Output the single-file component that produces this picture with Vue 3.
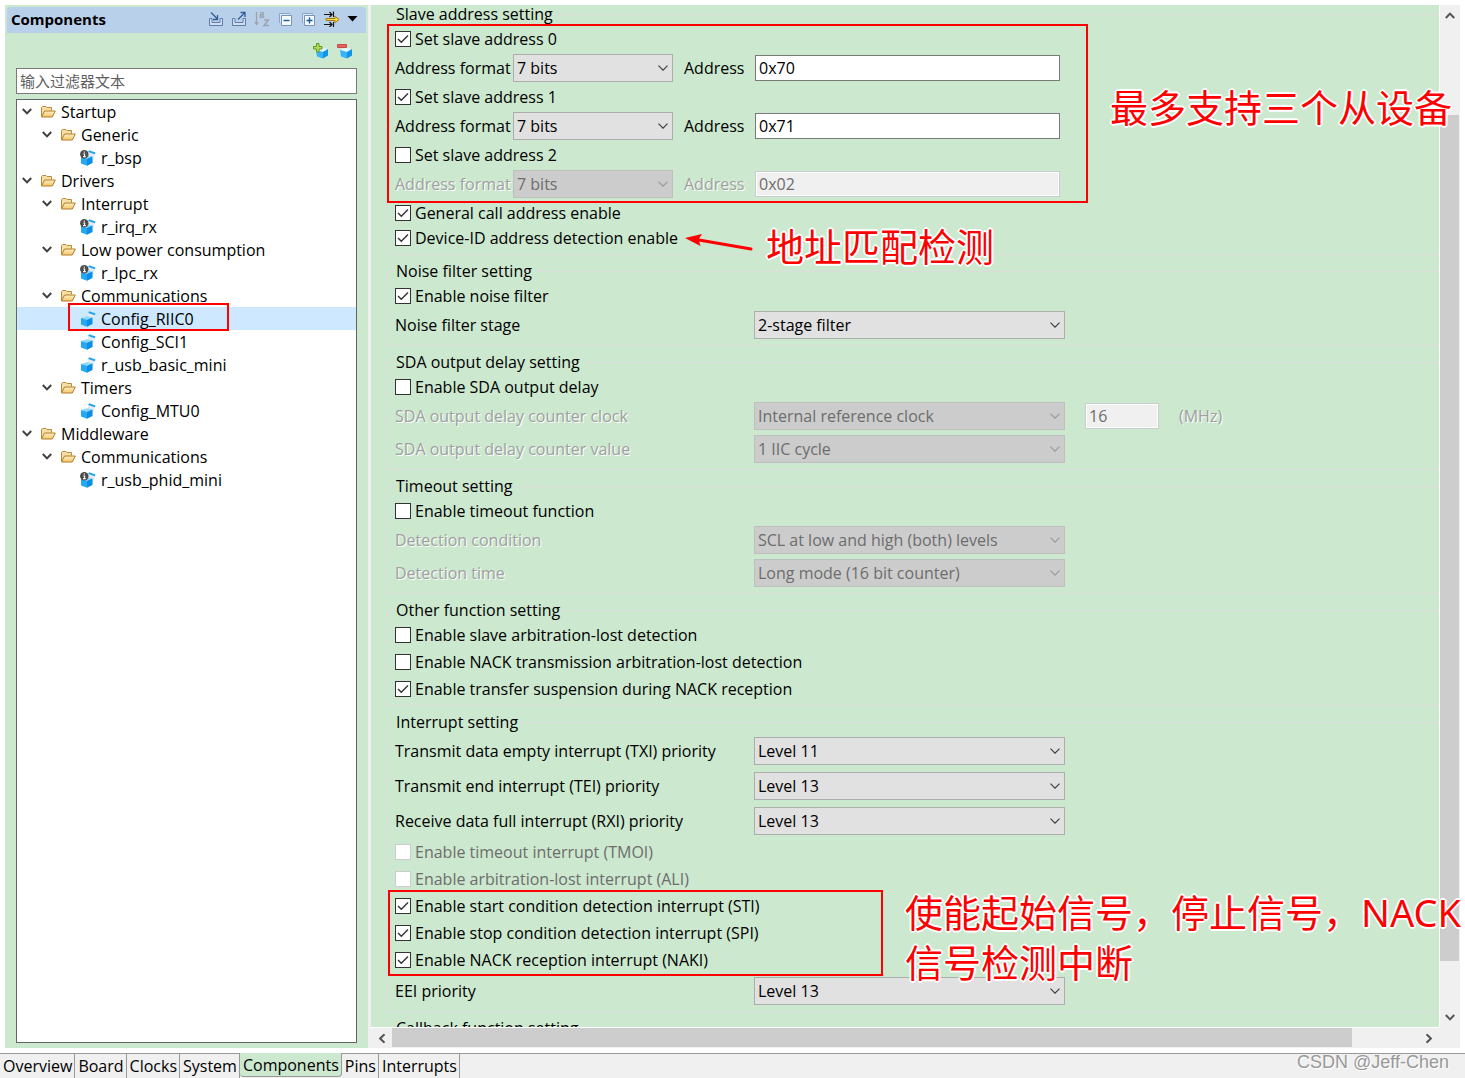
<script setup>
import { ref } from 'vue'

const filterText = ref('')

const tree = [
  { level: 0, kind: 'folder', name: 'Startup' },
  { level: 1, kind: 'folder', name: 'Generic' },
  { level: 2, kind: 'info', name: 'r_bsp' },
  { level: 0, kind: 'folder', name: 'Drivers' },
  { level: 1, kind: 'folder', name: 'Interrupt' },
  { level: 2, kind: 'info', name: 'r_irq_rx' },
  { level: 1, kind: 'folder', name: 'Low power consumption' },
  { level: 2, kind: 'info', name: 'r_lpc_rx' },
  { level: 1, kind: 'folder', name: 'Communications' },
  { level: 2, kind: 'cube', name: 'Config_RIIC0', selected: true },
  { level: 2, kind: 'cube', name: 'Config_SCI1' },
  { level: 2, kind: 'cube', name: 'r_usb_basic_mini' },
  { level: 1, kind: 'folder', name: 'Timers' },
  { level: 2, kind: 'cube', name: 'Config_MTU0' },
  { level: 0, kind: 'folder', name: 'Middleware' },
  { level: 1, kind: 'folder', name: 'Communications' },
  { level: 2, kind: 'info', name: 'r_usb_phid_mini' },
]

const groups = [
  {
    title: 'Slave address setting',
    rows: [
      { type: 'check', label: 'Set slave address 0', checked: true },
      { type: 'address', value: '7 bits', address: '0x70' },
      { type: 'check', label: 'Set slave address 1', checked: true },
      { type: 'address', value: '7 bits', address: '0x71' },
      { type: 'check', label: 'Set slave address 2', checked: false },
      { type: 'address', value: '7 bits', address: '0x02', disabled: true },
      { type: 'check', label: 'General call address enable', checked: true },
      { type: 'check', label: 'Device-ID address detection enable', checked: true },
    ],
  },
  {
    title: 'Noise filter setting',
    rows: [
      { type: 'check', label: 'Enable noise filter', checked: true },
      { type: 'select', label: 'Noise filter stage', value: '2-stage filter' },
    ],
  },
  {
    title: 'SDA output delay setting',
    rows: [
      { type: 'check', label: 'Enable SDA output delay', checked: false },
      { type: 'select', label: 'SDA output delay counter clock', value: 'Internal reference clock', disabled: true, extra: '16', unit: '(MHz)' },
      { type: 'select', label: 'SDA output delay counter value', value: '1 IIC cycle', disabled: true },
    ],
  },
  {
    title: 'Timeout setting',
    rows: [
      { type: 'check', label: 'Enable timeout function', checked: false },
      { type: 'select', label: 'Detection condition', value: 'SCL at low and high (both) levels', disabled: true },
      { type: 'select', label: 'Detection time', value: 'Long mode (16 bit counter)', disabled: true },
    ],
  },
  {
    title: 'Other function setting',
    roomy: true,
    rows: [
      { type: 'check', label: 'Enable slave arbitration-lost detection', checked: false },
      { type: 'check', label: 'Enable NACK transmission arbitration-lost detection', checked: false },
      { type: 'check', label: 'Enable transfer suspension during NACK reception', checked: true },
    ],
  },
  {
    title: 'Interrupt setting',
    roomy: true,
    rows: [
      { type: 'select', label: 'Transmit data empty interrupt (TXI) priority', value: 'Level 11' },
      { type: 'select', label: 'Transmit end interrupt (TEI) priority', value: 'Level 13' },
      { type: 'select', label: 'Receive data full interrupt (RXI) priority', value: 'Level 13' },
      { type: 'check', label: 'Enable timeout interrupt (TMOI)', checked: false, disabled: true },
      { type: 'check', label: 'Enable arbitration-lost interrupt (ALI)', checked: false, disabled: true },
      { type: 'check', label: 'Enable start condition detection interrupt (STI)', checked: true },
      { type: 'check', label: 'Enable stop condition detection interrupt (SPI)', checked: true },
      { type: 'check', label: 'Enable NACK reception interrupt (NAKI)', checked: true },
      { type: 'select', label: 'EEI priority', value: 'Level 13' },
    ],
  },
  { title: 'Callback function setting', rows: [] },
]

const tabs = ['Overview', 'Board', 'Clocks', 'System', 'Components', 'Pins', 'Interrupts']
const activeTab = ref('Components')
</script>

<template>
  <div class="page">
    <svg class="defs" width="0" height="0" aria-hidden="true">
      <defs>
        <linearGradient id="folderFill" x1="0" y1="0" x2="0" y2="1">
          <stop offset="0" stop-color="#fff0c4" />
          <stop offset="1" stop-color="#f3c566" />
        </linearGradient>
        <symbol id="icon-folder" viewBox="0 0 16 16">
          <path d="M1.5 12.5V3.5L2.5 2.5H6L7 3.5H11.5V6.5" fill="#f6dfa4" stroke="#b98a3c" />
          <path d="M1.5 13L4.5 7H15.3L12.3 13Z" fill="url(#folderFill)" stroke="#b27d2c" />
        </symbol>
        <symbol id="icon-cube" viewBox="0 0 16 16">
          <path d="M8 1.2L15 3.5L13 11L8 13Z" fill="#e4ebf1" />
          <path d="M9 0.3L15.5 2.6L14.8 4.2L8.3 2Z" fill="#1ca3f2" />
          <path d="M1 7L7 5.2L12.5 6.6L7 8.8Z" fill="#8bd8ff" />
          <path d="M1 7L7 8.8V15.8L1 13.4Z" fill="#25a9f5" />
          <path d="M7 8.8L12.5 6.6V13L7 15.8Z" fill="#0c8fe2" />
        </symbol>
        <symbol id="icon-info" viewBox="0 0 16 16">
          <use href="#icon-cube" />
          <circle cx="4.3" cy="4.3" r="4.2" fill="#4b4b4b" />
          <path d="M4.3 1.4V2.8M3.2 4H4.6V6.4M3 6.6H5.8" stroke="#fff" stroke-width="1.1" fill="none" />
        </symbol>
        <symbol id="icon-box" viewBox="0 0 16 16">
          <path d="M3 7L8 4.5L15 6L10 9Z" fill="#e2f5ff" />
          <path d="M3 7L10 9V15.5L4 13.5Z" fill="#35b4fb" />
          <path d="M10 9L15 6V12.5L10 15.5Z" fill="#1294e4" />
        </symbol>
        <symbol id="chevron" viewBox="0 0 10 6">
          <path d="M0.5 0.7L5 5.2L9.5 0.7" fill="none" stroke="currentColor" stroke-width="1.2" />
        </symbol>
        <symbol id="chevron-bold" viewBox="0 0 10 7">
          <path d="M0.8 1L5 5.4L9.2 1" fill="none" stroke="currentColor" stroke-width="2" />
        </symbol>
      </defs>
    </svg>

    <main class="workspace">
      <aside class="side">
        <header class="side-head">
          <h1>Components</h1>
          <div class="tools">
            <button type="button" aria-label="Import">
              <svg width="16" height="16" viewBox="0 0 16 16" fill="none">
                <path d="M4 7.5H1.5V14.5H14.5V7.5H12V11.5H4Z" fill="#d5deee" stroke="#5f7cab" />
                <path d="M3 1.5L9 7.5M9.5 4V8.5H5" stroke="#2f5f96" stroke-width="1.3" />
              </svg>
            </button>
            <button type="button" aria-label="Export">
              <svg width="16" height="16" viewBox="0 0 16 16" fill="none">
                <path d="M4 7.5H1.5V14.5H14.5V7.5H12V11.5H4Z" fill="#d5deee" stroke="#5f7cab" />
                <path d="M7 8.5L13.5 2M9.5 1.5H14V6" stroke="#2f5f96" stroke-width="1.3" />
              </svg>
            </button>
            <button type="button" aria-label="Sort">
              <svg width="16" height="16" viewBox="0 0 16 16" fill="none" stroke="#9da3ab">
                <path d="M2.5 1V13M0.8 11L2.5 13.5L4.2 11" stroke-width="1.3" />
                <path d="M6 1.6H9V6.5M9 3.8H6.3V6.3H10.2" stroke-width="1.4" />
                <path d="M10 9H14.5L10 14.5H15" stroke-width="1.5" />
              </svg>
            </button>
            <button type="button" aria-label="Collapse all">
              <svg width="16" height="16" viewBox="0 0 16 16" fill="none">
                <path d="M2.5 12V2.5H13" stroke="#8aa5c8" fill="#dfe9f5" />
                <path d="M4.5 4.5H14.5V14.5H4.5Z" stroke="#7893b7" fill="#f4fafd" />
                <path d="M6.5 9.5H12.5" stroke="#1d5c97" stroke-width="1.4" />
              </svg>
            </button>
            <button type="button" aria-label="Expand all">
              <svg width="16" height="16" viewBox="0 0 16 16" fill="none">
                <path d="M2.5 12V2.5H13" stroke="#8aa5c8" fill="#dfe9f5" />
                <path d="M4.5 4.5H14.5V14.5H4.5Z" stroke="#7893b7" fill="#f4fafd" />
                <path d="M6.5 9.5H12.5M9.5 6.5V12.5" stroke="#1d5c97" stroke-width="1.4" />
              </svg>
            </button>
            <button type="button" aria-label="Filter">
              <svg width="17" height="16" viewBox="0 0 17 16" fill="none">
                <path d="M1 3.5H9M6.5 1L9 3.5L6.5 6M10.5 0.5V6M1 13.5H9M6.5 11L9 13.5L6.5 16M10.5 11V16" stroke="#151515" stroke-width="1.2" />
                <path d="M3 7.5H12V5.2L16 8.5L12 11.8V9.5H3Z" fill="#ffd83b" stroke="#a57d12" />
              </svg>
            </button>
            <button type="button" aria-label="View menu">
              <svg width="11" height="6" viewBox="0 0 11 6"><path d="M0.5 0H10.5L5.5 5.5Z" fill="#000" /></svg>
            </button>
          </div>
        </header>
        <div class="side-tools">
          <button type="button" aria-label="Add component">
            <svg width="16" height="16" viewBox="0 0 16 16">
              <use href="#icon-box" />
              <path d="M3.5 0.5H6V3.5H9V6H6V9H3.5V6H0.5V3.5H3.5Z" fill="#b6dd53" stroke="#5a9a25" />
            </svg>
          </button>
          <button type="button" aria-label="Remove component">
            <svg width="16" height="16" viewBox="0 0 16 16">
              <use href="#icon-box" />
              <path d="M0.5 1.5H9.5V4.5H0.5Z" fill="#e0665f" stroke="#c64a48" />
            </svg>
          </button>
        </div>
        <input v-model="filterText" class="filter" type="text" placeholder="输入过滤器文本" aria-label="输入过滤器文本" />
        <ul class="tree">
          <li
            v-for="(node, i) in tree"
            :key="i"
            :class="['node', 'level-' + node.level, { selected: node.selected }]"
          >
            <span class="twisty">
              <svg v-if="node.kind === 'folder'" width="10" height="7"><use href="#chevron-bold" /></svg>
            </span>
            <svg class="node-icon" width="16" height="16"><use :href="'#icon-' + node.kind" /></svg>
            <span>{{ node.name }}</span>
          </li>
        </ul>
      </aside>

      <section class="editor">
        <form class="form" @submit.prevent>
          <fieldset v-for="(group, g) in groups" :key="g" :class="{ roomy: group.roomy }">
            <legend>{{ group.title }}</legend>
            <div class="rows">
              <template v-for="(row, r) in group.rows" :key="r">
                <label v-if="row.type === 'check'" :class="['check', { disabled: row.disabled }]">
                  <span class="tick">
                    <input v-model="row.checked" type="checkbox" :disabled="row.disabled" />
                    <svg v-if="row.checked" width="16" height="16" viewBox="0 0 16 16">
                      <path d="M3 8L6.3 11.3L13 4.6" fill="none" stroke="#333" stroke-width="1.4" />
                    </svg>
                  </span>
                  <span>{{ row.label }}</span>
                </label>

                <div v-else-if="row.type === 'address'" :class="['address', { disabled: row.disabled }]">
                  <label :for="`format-${r}`">Address format</label>
                  <span class="combo">
                    <select :id="`format-${r}`" :disabled="row.disabled"><option>{{ row.value }}</option></select>
                    <svg width="10" height="6"><use href="#chevron" /></svg>
                  </span>
                  <label :for="`address-${r}`">Address</label>
                  <input :id="`address-${r}`" class="text" type="text" :value="row.address" :disabled="row.disabled" />
                </div>

                <div v-else :class="['setting', { disabled: row.disabled }]">
                  <label :for="`setting-${g}-${r}`">{{ row.label }}</label>
                  <span class="combo">
                    <select :id="`setting-${g}-${r}`" :disabled="row.disabled"><option>{{ row.value }}</option></select>
                    <svg width="10" height="6"><use href="#chevron" /></svg>
                  </span>
                  <template v-if="row.extra">
                    <input :id="`extra-${g}-${r}`" class="text" type="text" :value="row.extra" :disabled="row.disabled" />
                    <label :for="`extra-${g}-${r}`">{{ row.unit }}</label>
                  </template>
                </div>
              </template>
            </div>
          </fieldset>
        </form>
        <div class="vbar">
          <button type="button" aria-label="Scroll up"><svg class="up" width="10" height="7"><use href="#chevron-bold" /></svg></button>
          <div class="vtrack"><div class="vthumb"></div></div>
          <button type="button" aria-label="Scroll down"><svg width="10" height="7"><use href="#chevron-bold" /></svg></button>
        </div>
        <div class="hbar">
          <button type="button" aria-label="Scroll left"><svg class="left" width="10" height="7"><use href="#chevron-bold" /></svg></button>
          <div class="htrack"><div class="hthumb"></div></div>
          <button type="button" aria-label="Scroll right"><svg class="right" width="10" height="7"><use href="#chevron-bold" /></svg></button>
        </div>
        <div class="corner"></div>
      </section>
    </main>

    <nav class="tabs">
      <button
        v-for="tab in tabs"
        :key="tab"
        type="button"
        :class="{ active: tab === activeTab }"
        @click="activeTab = tab"
      >{{ tab }}</button>
    </nav>

    <div class="mark mark-tree"></div>
    <div class="mark mark-address"></div>
    <div class="mark mark-interrupt"></div>
    <svg class="arrow" width="70" height="18" viewBox="0 0 70 18">
      <path d="M14 6L66 15" stroke="#f00" stroke-width="3" stroke-linecap="round" />
      <path d="M0 4L17 0L13.5 5.5L15.5 12Z" fill="#f00" />
    </svg>
    <p class="note note-slaves">最多支持三个从设备</p>
    <p class="note note-match">地址匹配检测</p>
    <p class="note note-signals">使能起始信号，停止信号，NACK<br />信号检测中断</p>
    <p class="watermark">CSDN @Jeff-Chen</p>
  </div>
</template>

<style>
body {
  margin: 0;
  background: #fff;
}
</style>

<style scoped>
.page {
  position: relative;
  display: flex;
  flex-direction: column;
  height: 100vh;
  overflow: hidden;
  background: #fff;
  color: #000;
  font: 16px/20px "Open Sans", "Noto Sans CJK SC", sans-serif;
}
.page * {
  box-sizing: border-box;
}
.defs {
  position: absolute;
}
button,
input,
select {
  margin: 0;
  font: inherit;
  color: inherit;
}
button {
  display: flex;
  align-items: center;
  justify-content: center;
  padding: 0;
  border: 0;
  background: none;
}

.workspace {
  flex: 1;
  display: flex;
  min-height: 0;
  padding: 5px;
}

/* component tree */
.side {
  flex: none;
  display: flex;
  flex-direction: column;
  width: 366px;
  padding: 1px 2px 5px;
  border-right: 3px solid #f0f0f0;
  background: #cce8cf;
}
.side-head {
  display: flex;
  align-items: center;
  justify-content: space-between;
  height: 27px;
  padding: 0 8px 3px 4px;
  border-top: 1px solid #cce8cf;
  border-radius: 4px 4px 0 0;
  background: #b9d0ea;
}
h1 {
  margin: 0;
  font-size: 15px;
  line-height: 20px;
}
.tools {
  display: flex;
  gap: 7px;
}
.side-tools {
  display: flex;
  justify-content: flex-end;
  gap: 8px;
  padding: 10px 13px 9px 0;
}
.filter {
  height: 26px;
  margin: 0 9px 5px;
  padding: 0 3px;
  border: 1px solid #7a7a7a;
  background: #fff;
  font-size: 15px;
}
.filter::placeholder {
  color: #606060;
  opacity: 1;
}
.tree {
  flex: 1;
  margin: 0 9px;
  padding: 0;
  border: 1px solid #646464;
  background: #fff;
  list-style: none;
}
.node {
  display: flex;
  align-items: center;
  height: 23px;
  white-space: nowrap;
}
.level-1 {
  padding-left: 20px;
}
.level-2 {
  padding-left: 40px;
}
.selected {
  background: #cde8ff;
}
.twisty {
  display: flex;
  justify-content: center;
  width: 20px;
  color: #404040;
}
.node-icon {
  margin: 0 5px 0 3px;
}

/* settings form */
.editor {
  flex: 1;
  display: grid;
  grid-template: minmax(0, 1fr) 21px / minmax(0, 1fr) 21px;
  background: #cce8cf;
}
.form {
  display: flex;
  flex-direction: column;
  gap: 6px;
  margin-top: -1px;
  padding-left: 16px;
  overflow: hidden;
}
fieldset {
  flex: none;
  min-width: 0;
  margin: 0;
  padding: 4px 0 5px 7px;
  border: 1px solid #dcdcdc;
  border-right: 0;
}
legend {
  padding: 0 2px 0 1px;
  line-height: 20px;
}
.rows {
  display: flex;
  flex-direction: column;
  gap: 3px;
}
.roomy .rows {
  gap: 5px;
}
.check {
  display: flex;
  align-items: center;
  align-self: flex-start;
  gap: 4px;
  height: 22px;
}
.check.disabled {
  color: #6d6d6d;
}
.tick {
  position: relative;
  width: 16px;
  height: 16px;
}
.tick input {
  display: block;
  width: 16px;
  height: 16px;
  appearance: none;
  border: 1px solid #333;
  background: #fff;
}
.tick input:disabled {
  border-color: #ccc;
}
.tick svg {
  position: absolute;
  inset: 0;
  pointer-events: none;
}
.address,
.setting {
  display: grid;
  align-items: center;
  height: 30px;
  white-space: nowrap;
}
.address {
  grid-template-columns: 118px 160px 71px 305px;
}
.address .combo + label {
  margin-left: 11px;
}
.address label + .text {
  margin-left: 11px;
  margin-right: -11px;
}
.setting {
  grid-template-columns: 359px 311px 74px auto;
}
.setting .text {
  margin: 0 -20px 0 20px;
}
.setting .text + label {
  margin-left: 40px;
}
.disabled > label {
  color: #a0a0a0;
  text-shadow: 1px 1px #fff;
}
.combo {
  position: relative;
  display: block;
  height: 28px;
  color: #000;
}
.combo select {
  display: block;
  width: 100%;
  height: 28px;
  padding: 0 3px;
  appearance: none;
  border: 1px solid #adadad;
  border-radius: 0;
  background: #e1e1e1;
}
.combo svg {
  position: absolute;
  top: 11px;
  right: 5px;
  color: #404040;
  pointer-events: none;
}
.combo select:disabled {
  border-color: #bfbfbf;
  background: #ccc;
  color: #6d6d6d;
  opacity: 1;
}
.disabled .combo svg {
  color: #9a9a9a;
}
.text {
  height: 26px;
  min-width: 0;
  padding: 0 3px;
  border: 1px solid #7a7a7a;
  background: #fff;
}
.text:disabled {
  border-color: #ccc;
  box-shadow: inset 0 0 0 1px #fff;
  background: #f0f0f0;
  color: #6d6d6d;
}

/* scroll bars */
.vbar,
.hbar {
  display: flex;
  background: #f0f0f0;
  color: #555;
}
.vbar {
  flex-direction: column;
  border-left: 1px solid #fff;
}
.hbar {
  border-top: 1px solid #fff;
}
.vbar button {
  height: 20px;
}
.hbar button {
  width: 21px;
}
.vtrack {
  flex: 1;
  padding-top: 90px;
}
.vthumb {
  height: 95%;
  max-height: 846px;
  margin-right: 1px;
  background: #cdcdcd;
}
.htrack {
  flex: 1;
}
.hthumb {
  width: 93.6%;
  height: 19px;
  background: #cdcdcd;
}
.up {
  transform: rotate(180deg);
}
.left {
  transform: rotate(90deg);
}
.right {
  transform: rotate(-90deg);
}
.corner {
  background: #f0f0f0;
}

/* page tabs */
.tabs {
  flex: none;
  display: flex;
  height: 25px;
  border-top: 1px solid #999;
  background: #f0f0f0;
}
.tabs button {
  padding: 0 2px 0 3px;
  border-right: 1px solid #999;
}
.tabs .active {
  height: 24px;
  margin-top: -1px;
  border-bottom: 1px solid #999;
  border-radius: 0 0 4px 4px;
  background: #cce8cf;
}

/* annotations drawn over the window */
.mark {
  position: absolute;
  border: 2px solid #f00;
  pointer-events: none;
}
.mark-tree {
  left: 68px;
  top: 303px;
  width: 161px;
  height: 28px;
}
.mark-address {
  left: 387px;
  top: 24px;
  width: 701px;
  height: 179px;
}
.mark-interrupt {
  left: 388px;
  top: 890px;
  width: 495px;
  height: 86px;
}
.arrow {
  position: absolute;
  left: 685px;
  top: 234px;
}
.note {
  position: absolute;
  margin: 0;
  color: #f00;
  font-family: "Noto Sans", "Noto Sans CJK SC", sans-serif;
  font-size: 38px;
  line-height: 50px;
  white-space: nowrap;
  text-shadow: 2px 0 #fff, -2px 0 #fff, 0 2px #fff, 0 -2px #fff, 1px 1px #fff, -1px 1px #fff, 1px -1px #fff, -1px -1px #fff;
}
.note-slaves {
  left: 1110px;
  top: 82px;
}
.note-match {
  left: 766px;
  top: 221px;
}
.note-signals {
  left: 905px;
  top: 887px;
}
.watermark {
  position: absolute;
  left: 1297px;
  top: 1051px;
  margin: 0;
  color: #999;
  font: 18px/22px "Liberation Sans", sans-serif;
  text-shadow: 1px 1px #fff;
}
</style>
